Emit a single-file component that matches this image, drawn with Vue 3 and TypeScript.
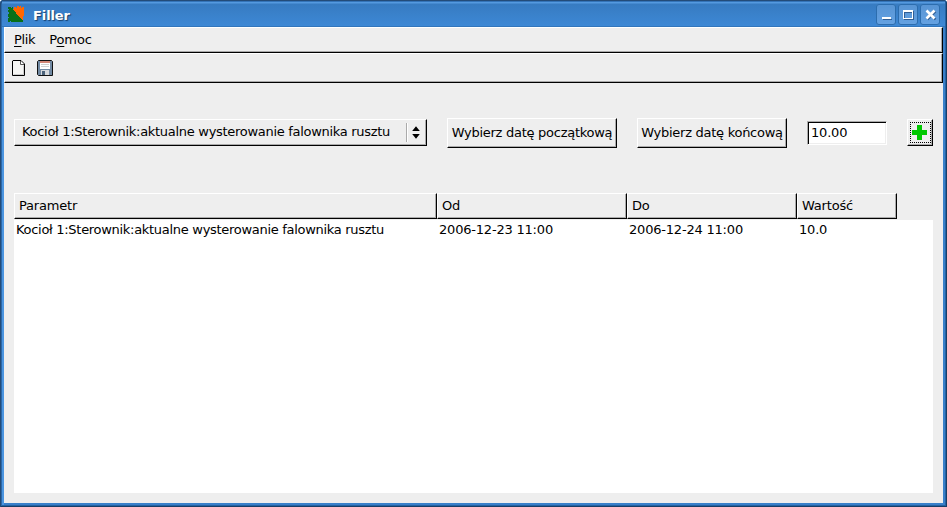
<script setup lang="ts">
import { ref } from 'vue'

interface Entry {
  name: string
  from: string
  to: string
  value: string
}

const parameter = 'Kocioł 1:Sterownik:aktualne wysterowanie falownika rusztu'
const amount = ref('10.00')
const columns = ['Parametr', 'Od', 'Do', 'Wartość']
const entries = ref<Entry[]>([
  { name: parameter, from: '2006-12-23 11:00', to: '2006-12-24 11:00', value: '10.0' },
])
</script>

<template>
  <div class="window">
    <header class="titlebar">
      <svg class="logo" width="16" height="16" viewBox="0 0 16 16" shape-rendering="crispEdges">
        <path fill="#087018" d="M0 1h3v1h1V1h1v2h1v1h1v1h1v2h1v1h1v1h1v1h1v1h1v1h1v1h1v3H3v-1H2v1H0v-4h1v-1H0V8h1V6H0V4h1V3H0z" />
        <path fill="#ff6600" d="M5 3h1V1h2v1h1V0h2v1h1V0h1v2h1V1h2v9h-1v4h-1v-1h-1v-1h-1v-1h-1v-1h-1V9H9V8H8V6H7V5H6V4H5z" />
      </svg>
      <span class="caption">Filler</span>
      <div class="controls">
        <button class="control" aria-label="Minimize">
          <svg width="20" height="21" viewBox="0 0 20 21" shape-rendering="crispEdges"><path fill="#315e94" d="M7 15h9v1H7z" /><path fill="#fff" d="M6 13h9v2H6z" /></svg>
        </button>
        <button class="control" aria-label="Maximize">
          <svg width="20" height="21" viewBox="0 0 20 21" shape-rendering="crispEdges"><path fill="#315e94" d="M6 15h10v1H6zM15 7h1v9h-1zM6 8h8v1H7v5H6z" /><path fill="#fff" fill-rule="evenodd" d="M5 6h10v9H5zM6 8v6h8V8z" /></svg>
        </button>
        <button class="control" aria-label="Close">
          <svg width="20" height="21" viewBox="0 0 20 21"><path stroke="#315e94" stroke-width="2.200" d="m7.500 7.500 8 8m0-8-8 8" /><path stroke="#fff" stroke-width="2.600" d="m6.500 6.500 8 8m0-8-8 8" /></svg>
        </button>
      </div>
    </header>
    <main class="client">
      <nav class="menubar">
        <span class="menu"><u>P</u>lik</span>
        <span class="menu">P<u>o</u>moc</span>
      </nav>
      <div class="toolbar">
        <svg width="16" height="16" viewBox="0 0 16 16">
          <path d="M2 .5h8L13.500 4v11.500h-12V1z" fill="#f6f6f4" stroke="#000" />
          <path d="M9.500 1v3.500H13" fill="#fff" stroke="#555" />
          <path d="M12.500 5.500v9h-10" fill="none" stroke="#ccc" />
        </svg>
        <svg width="16" height="16" viewBox="0 0 16 16">
          <path d="M1.500.5h13l1 1v14H1.500l-1-1v-13z" fill="#7189a2" stroke="#111" />
          <path d="M3 1h10v8H3z" fill="#fff" />
          <path d="M3 1h10v2H3z" fill="#d08474" />
          <path d="M4 4.500h8M4 6.500h8" stroke="#d0d0d0" />
          <path d="M4 10h8v5H4z" fill="#d4d8dc" />
          <path d="M5 11h3v4H5z" fill="#496179" />
        </svg>
      </div>
      <section class="form">
        <button class="raised combo">
          <span>{{ parameter }}</span>
          <span class="spinner">
            <svg width="8" height="13" viewBox="0 0 8 13"><path d="M.2 5 4 .2 7.800 5zM.2 8h7.600L4 12.800z" /></svg>
          </span>
        </button>
        <button class="raised date first">Wybierz datę początkową</button>
        <button class="raised date second">Wybierz datę końcową</button>
        <input v-model="amount" class="amount" aria-label="Wartość">
        <button class="raised add" aria-label="+">
          <span class="focus">
            <svg width="15" height="15" viewBox="0 0 15 15" shape-rendering="crispEdges"><path fill="#00c800" d="M5 0h5v5h5v5h-5v5H5v-5H0V5h5z" /></svg>
          </span>
        </button>
      </section>
      <section class="table">
        <div class="grid head">
          <div v-for="c in columns" :key="c" class="raised th">{{ c }}</div>
        </div>
        <div class="body">
          <div v-for="e in entries" :key="e.from" class="grid row">
            <span class="name">{{ e.name }}</span>
            <span>{{ e.from }}</span>
            <span>{{ e.to }}</span>
            <span>{{ e.value }}</span>
          </div>
        </div>
      </section>
    </main>
  </div>
</template>

<style>
body {
  margin: 0;
  background: #fff;
  overflow: hidden;
}
</style>

<style scoped>
* {
  box-sizing: border-box;
}

.window {
  width: 947px;
  height: 507px;
  display: flex;
  flex-direction: column;
  padding: 0 4px 4px;
  font: 13px/16px "DejaVu Sans", sans-serif;
  letter-spacing: -0.2px;
  color: #000;
  background: #3980ca;
  box-shadow: inset 1px 1px #234b78, inset -1px -1px #173e68, inset 2px 0 #2b68a8, inset -2px -2px #2463a4, inset 4px 0 #4b95e0;
  border-radius: 4px 4px 0 0;
  white-space: nowrap;
}

.titlebar {
  height: 27px;
  flex: none;
  display: flex;
  align-items: center;
  margin: 0 -2px;
  padding: 2px 5px 0 6px;
  background: linear-gradient(#234b78 0 1px, #3474b8 1px 2px, #5499df 2px 3px, #377bc1 4px, #3d88d5 26px, #3276bc 26px);
}

.logo {
  margin-top: -1px;
}

.caption {
  margin: 2px 0 0 9px;
  color: #fff;
  font-weight: bold;
  letter-spacing: -0.1px;
  text-shadow: 1px 1px 1px #173f6c;
}

.controls {
  display: flex;
  gap: 2px;
  margin-left: auto;
  height: 21px;
  margin-top: -1px;
}

.control {
  width: 20px;
  height: 21px;
  padding: 0;
  border: 0;
  border-radius: 3px;
  background: linear-gradient(#5794d4, #65a2e2);
  box-shadow: inset 0 0 0 1px #2c6dae;
}

.control svg {
  display: block;
}

.client {
  flex: 1;
  display: flex;
  flex-direction: column;
  background: #eee;
}

.menubar,
.toolbar {
  display: flex;
  border: 1px solid;
  border-color: #fff #000 #000 #fff;
  box-shadow: inset -1px -1px #aaa;
}

.menubar {
  height: 26px;
  gap: 14px;
  padding: 4px 9px;
  letter-spacing: -0.35px;
}

.menu:last-child {
  letter-spacing: -0.1px;
}

.menu u {
  text-underline-offset: 2px;
  text-decoration-thickness: 1px;
}

.toolbar {
  height: 30px;
  gap: 10px;
  padding: 6px 6px;
}

.form {
  display: flex;
  align-items: center;
  gap: 20px;
  height: 30px;
  margin: 35px 10px 0;
}

.raised {
  font: inherit;
  letter-spacing: inherit;
  color: #000;
  padding: 0;
  background: #eee;
  border: 1px solid;
  border-color: #fff #000 #000 #fff;
  border-radius: 0;
  box-shadow: inset -1px -1px #aaa;
}

.combo {
  width: 413px;
  height: 27px;
  margin-top: -1px;
  padding: 0 6px 2px 7px;
  display: flex;
  align-items: center;
  justify-content: space-between;
  letter-spacing: -0.295px;
}

.spinner {
  height: 19px;
  display: flex;
  align-items: center;
  margin-top: 1px;
  padding-left: 5px;
  border-left: 1px solid #aaa;
  box-shadow: inset 1px 0 #fff;
}

.date {
  height: 30px;
  letter-spacing: -0.27px;
}

.first {
  width: 170px;
}

.second {
  width: 150px;
}

.amount {
  width: 80px;
  height: 24px;
  padding: 0 3px 2px;
  font: inherit;
  letter-spacing: inherit;
  color: #000;
  background: #fff;
  border: 1px solid;
  border-color: #aaa #fff #fff #aaa;
  border-radius: 0;
  box-shadow: inset 1px 1px #000, inset -1px -1px #eee;
  outline: 0;
}

.add {
  width: 26px;
  height: 27px;
  margin-top: -1px;
  padding: 2px 2px 3px;
}

.focus {
  display: flex;
  align-items: center;
  justify-content: flex-start;
  width: 21px;
  height: 21px;
  padding-left: 1px;
  border: 1px dotted #000;
}

.focus svg {
  flex: none;
}

.table {
  display: flex;
  flex-direction: column;
  flex: 1;
  margin: 45px 10px 10px;
}

.grid {
  display: grid;
  grid-template-columns: 423px 190px 170px 100px;
}

.th {
  height: 26px;
  padding: 4px;
}

.body {
  flex: 1;
  margin-top: 1px;
  background: #fff;
}

.row {
  padding: 2px;
}

.name {
  letter-spacing: -0.295px;
}
</style>
